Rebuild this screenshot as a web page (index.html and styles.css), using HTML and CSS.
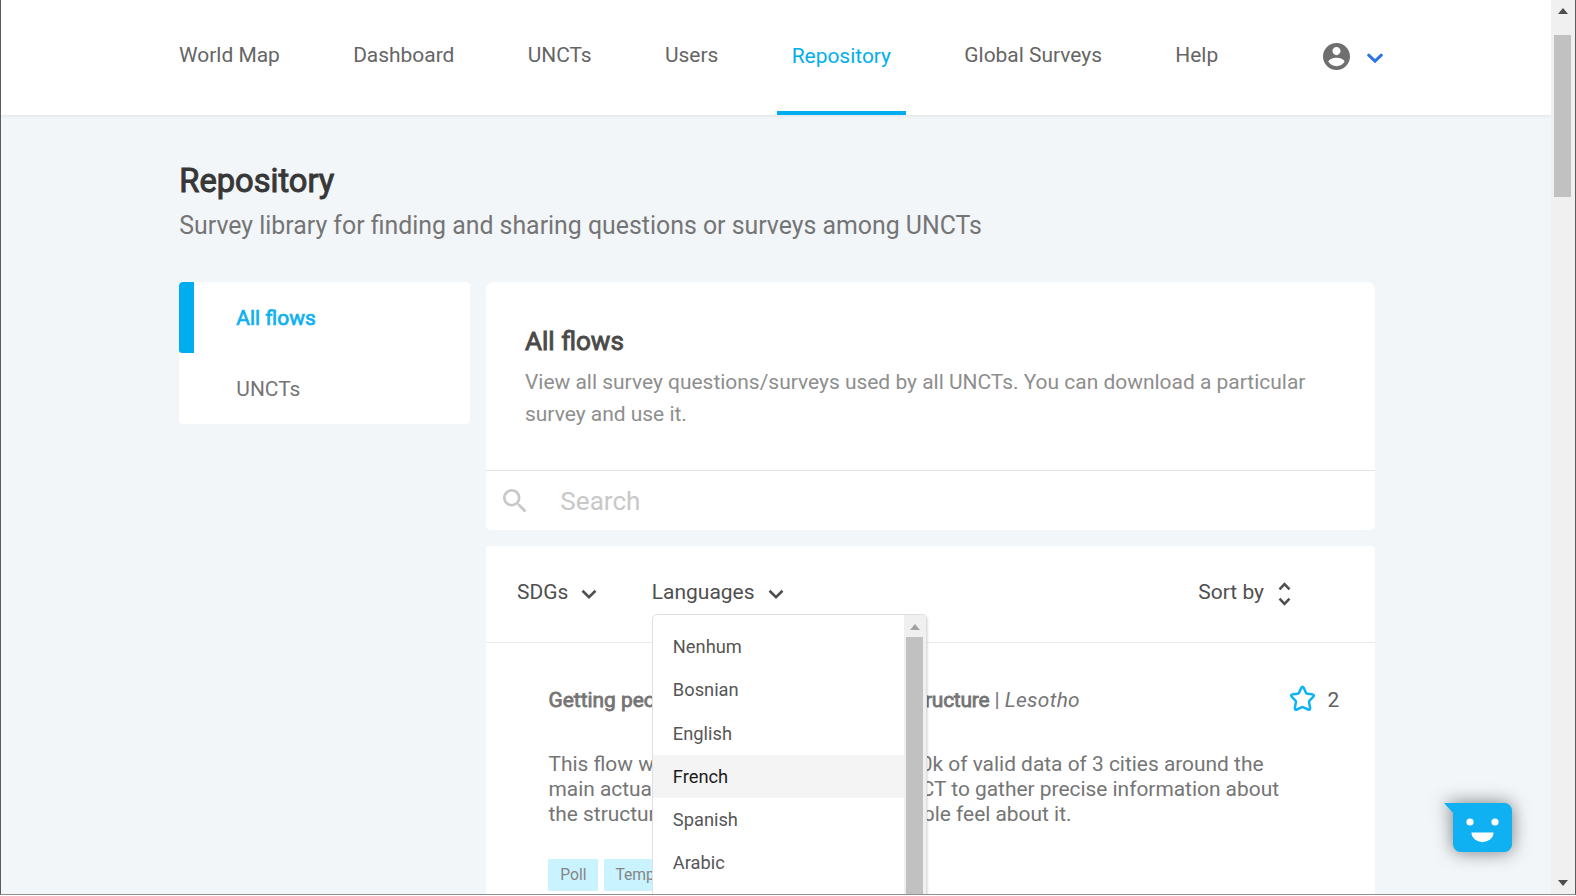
FILE: index.html
```html
<!DOCTYPE html>
<html lang="en">
<head>
<meta charset="utf-8">
<title>Repository</title>
<link rel="stylesheet" href="styles.css">
</head>
<body>
<div class="window">
  <div class="page">
    <header class="header">
      <nav class="nav">
        <a class="nav-item">World Map</a>
        <a class="nav-item">Dashboard</a>
        <a class="nav-item">UNCTs</a>
        <a class="nav-item">Users</a>
        <a class="nav-item nav-item-active">Repository</a>
        <a class="nav-item">Global Surveys</a>
        <a class="nav-item">Help</a>
      </nav>
      <div class="account">
        <svg class="account-icon" viewBox="2 2 20 20"><path d="M12 2C6.48 2 2 6.48 2 12s4.48 10 10 10 10-4.48 10-10S17.52 2 12 2zm0 3c1.66 0 3 1.34 3 3s-1.34 3-3 3-3-1.34-3-3 1.34-3 3-3zm0 14.2c-2.5 0-4.71-1.28-6-3.22.03-1.99 4-3.08 6-3.08 1.99 0 5.97 1.09 6 3.08-1.29 1.94-3.5 3.22-6 3.22z"/></svg>
        <svg class="account-chevron" viewBox="0 0 16 11"><path d="M1.7 2.2 8 8.2l6.3-6"/></svg>
      </div>
    </header>

    <main class="content">
      <h1 class="title">Repository</h1>
      <p class="subtitle">Survey library for finding and sharing questions or surveys among UNCTs</p>
      <div class="columns">
        <aside class="sidebar">
          <a class="side-item side-item-active">All flows</a>
          <a class="side-item">UNCTs</a>
        </aside>
        <div class="main">
          <section class="card intro">
            <div class="intro-text">
              <h2 class="heading">All flows</h2>
              <p class="description">View all survey questions/surveys used by all UNCTs. You can download a particular<br>survey and use it.</p>
            </div>
            <div class="search">
              <svg class="search-icon" viewBox="3 3 17.5 17.5"><path d="M15.5 14h-.79l-.28-.27C15.41 12.59 16 11.11 16 9.5 16 5.91 13.09 3 9.5 3S3 5.91 3 9.5 5.91 16 9.5 16c1.61 0 3.09-.59 4.23-1.57l.27.28v.79l5 4.99L20.49 19l-4.99-5zm-6 0C7.01 14 5 11.99 5 9.5S7.01 5 9.5 5 14 7.01 14 9.5 11.99 14 9.5 14z"/></svg>
              <span>Search</span>
            </div>
          </section>

          <section class="card flows">
            <div class="filters">
              <div class="filter">SDGs<svg class="chevron" viewBox="0 0 16 11"><path d="M1.5 1.8 8 8.2l6.5-6.4"/></svg></div>
              <div class="filter filter-languages">Languages<svg class="chevron" viewBox="0 0 16 11"><path d="M1.5 1.8 8 8.2l6.5-6.4"/></svg>
                <div class="menu">
                  <div class="menu-list">
                    <div class="menu-item">Nenhum</div>
                    <div class="menu-item">Bosnian</div>
                    <div class="menu-item">English</div>
                    <div class="menu-item menu-item-hover">French</div>
                    <div class="menu-item">Spanish</div>
                    <div class="menu-item">Arabic</div>
                  </div>
                  <div class="menu-scroll">
                    <svg class="menu-arrow" viewBox="0 0 10 6"><path d="M0 6 5 0l5 6z"/></svg>
                    <div class="menu-thumb"></div>
                  </div>
                </div>
              </div>
              <div class="sort">Sort by<svg class="sort-icon" viewBox="0 0 13 24"><path d="M1.5 7.3 6.5 2.2l5 5.1M1.5 16.7l5 5.1 5-5.1"/></svg></div>
            </div>
            <article class="flow">
              <div class="flow-head">
                <div class="flow-title"><b class="strong">Getting people</b><span><b class="strong strong-end">structure</b> | <i>Lesotho</i></span></div>
                <div class="stars"><svg class="star" viewBox="0 0 28 28"><path d="M12.700 3Q14 .6 15.300 3l2.300 5Q18 8.900 19 9l5.200.7q2.700.6.900 2.500l-3.800 3.900q-.7.700-.5 1.600l1.100 6q.2 2.700-2 1.700l-4.900-2.300q-1-.5-2 0l-4.900 2.300q-2.200 1-2-1.700l1.100-6q.2-.9-.5-1.600l-3.800-3.900Q1.100 10.300 3.800 9.700L9 9q1-.1 1.400-1z"/></svg>2</div>
              </div>
              <div class="line line-1"><span>This flow will</span><span>10k of valid data of 3 cities around the</span></div>
              <div class="line line-2"><span>main actual</span><span>UNCT to gather precise information about</span></div>
              <div class="line line-3"><span>the structure</span><span>people feel about it.</span></div>
              <div class="tags"><span class="tag">Poll</span><span class="tag">Template</span></div>
            </article>
          </section>
        </div>
      </div>
    </main>
  </div>
  <div class="scrollbar">
    <svg class="scroll-arrow" viewBox="0 0 10 6"><path d="M0 6 5 0l5 6z"/></svg>
    <div class="scroll-thumb"></div>
    <svg class="scroll-arrow scroll-arrow-down" viewBox="0 0 10 6"><path d="M0 0h10L5 6z"/></svg>
  </div>
  <svg class="chat" viewBox="0 0 69 50"><path class="chat-body" d="M0 0H60.5a7.5 7.5 0 0 1 7.5 7.5v34a7.5 7.5 0 0 1-7.5 7.5h-44A7.5 7.5 0 0 1 9 41.5V10z"/><circle cx="26" cy="19" r="3.6"/><circle cx="51" cy="19" r="3.6"/><path d="M27.5 29.5h22a11 9.7 0 0 1-22 0z"/></svg>
</div>
</body>
</html>
```
FILE: styles.css
```css
* { box-sizing: border-box; }
body { margin: 0; font-family: Roboto, sans-serif; background: #fff; }
h1, h2, p { margin: 0; }
svg { display: block; flex: none; }

.window {
  position: relative;
  display: flex;
  width: 1576px;
  height: 895px;
  overflow: hidden;
  border: solid #5c5c5c;
  border-width: 0 1px 1px 1px;
  border-bottom-color: #8f8f8f;
}
.page { flex: 1; min-width: 0; height: 894px; overflow: hidden; background: #f2f6f9; }

/* Header */
.header {
  position: relative;
  display: flex;
  height: 115px;
  padding-left: 163px;
  background: #fff;
  box-shadow: 0 1px 4px rgba(0, 0, 0, .08);
}
.nav { display: flex; gap: 43.3px; }
.nav-item {
  padding: 40px 15px 0;
  font-size: 20.95px;
  line-height: 30px;
  color: #656565;
  white-space: nowrap;
}
.nav-item-active { padding-top: 41px; color: #00aeef; border-bottom: 4px solid #00aeef; }
.account { display: flex; gap: 17px; padding: 43px 0 0 90px; }
.account-icon { width: 27px; height: 27px; fill: #6f6f6f; }
.account-chevron { width: 16px; height: 11px; margin-top: 10px; fill: none; stroke: #2f74e6; stroke-width: 3; stroke-linecap: round; }

/* Page heading */
.content { padding: 46px 0 0 178.3px; }
.title { font-size: 32.65px; font-weight: 400; line-height: 40px; color: #373737; -webkit-text-stroke: 1px #373737; }
.subtitle { margin-top: 7.7px; font-size: 24.86px; line-height: 34px; color: #757575; }
.columns { display: flex; align-items: flex-start; gap: 16px; margin-top: 39.8px; }

/* Sidebar */
.sidebar { width: 291px; background: #fff; border-radius: 4px; overflow: hidden; }
.side-item { display: block; height: 70.7px; padding-left: 57px; font-size: 20.97px; line-height: 73px; color: #757575; }
.side-item-active {
  padding-left: 42px;
  color: #0db0f0;
  border-left: 15px solid #00aeef;
  border-radius: 3px 0 0 3px;
  -webkit-text-stroke: .7px #0db0f0;
}

/* Intro card */
.main { width: 888.7px; }
.card { background: #fff; }
.intro { height: 247.7px; border-radius: 8px 8px 5px 5px; }
.intro-text { height: 188.2px; padding: 43px 38.7px 0; border-bottom: 1px solid #e2e2e2; }
.heading { font-size: 26.1px; font-weight: 400; line-height: 33px; color: #4a4a4a; -webkit-text-stroke: .9px #4a4a4a; }
.description { margin-top: 9px; font-size: 20.96px; line-height: 31.35px; color: #8e8e8e; white-space: nowrap; }
.search { display: flex; align-items: center; gap: 33.5px; height: 60px; padding-left: 17px; font-size: 26.1px; color: #c8c8c8; }
.search-icon { width: 23.5px; height: 23.5px; fill: #c8c8c8; }

/* Flow list */
.flows { height: 349px; margin-top: 16px; border-radius: 3px; }
.filters {
  display: flex;
  height: 97px;
  padding: 31px 84px 0 30.7px;
  font-size: 20.97px;
  line-height: 30px;
  color: #4f4f4f;
  border-bottom: 1.5px solid #e9e9e9;
}
.filter { display: flex; gap: 13px; }
.filter-languages { position: relative; margin-left: 54.5px; }
.chevron { width: 16px; height: 11px; margin-top: 12px; fill: none; stroke: #4f4f4f; stroke-width: 2.6; }
.sort { display: flex; gap: 14px; margin-left: auto; }
.sort-icon { width: 13px; height: 24px; margin-top: 5px; fill: none; stroke: #4f4f4f; stroke-width: 2.6; }

/* Languages dropdown */
.menu {
  position: absolute;
  z-index: 2;
  left: 0;
  top: 37px;
  display: flex;
  width: 275px;
  height: 340px;
  background: #fff;
  border: 1px solid #e0e0e0;
  border-radius: 5px;
  box-shadow: 1px 1px 2px rgba(0, 0, 0, .12);
  overflow: hidden;
}
.menu-list { flex: 1; padding-top: 10px; }
.menu-item { height: 43.2px; padding-left: 20px; font-size: 18.3px; line-height: 43.2px; color: #565656; }
.menu-item-hover { color: #1c1c1c; background: #f4f4f4; }
.menu-scroll { display: flex; flex-direction: column; align-items: center; width: 22px; padding-top: 9px; background: #f0f0f0; }
.menu-arrow { width: 10px; height: 6px; margin-bottom: 7px; fill: #a2a2a2; }
.menu-thumb { flex: 1; width: 17px; background: #c1c1c1; }

/* Flow entry */
.flow { padding: 41px 0 0 62.2px; font-size: 20.9px; color: #757575; }
.flow-head { display: flex; line-height: 30px; white-space: nowrap; }
.flow-title { display: flex; justify-content: space-between; width: 531.5px; padding-top: 1px; }
.strong { font-weight: 400; -webkit-text-stroke: .8px #757575; }
.strong-end { letter-spacing: -.2px; }
.flow-title i { letter-spacing: .3px; }
.stars { display: flex; gap: 11px; margin-left: 209.5px; padding-top: .6px; color: #5f5f5f; }
.star { width: 27px; height: 27px; fill: none; stroke: #0fb2f5; stroke-width: 2.6; stroke-linejoin: round; }
.line { display: flex; justify-content: space-between; height: 25px; line-height: 25px; white-space: nowrap; }
.line-1 { width: 715px; margin-top: 37px; }
.line-2 { width: 730.5px; }
.line-3 { width: 523px; }
.tags { display: flex; gap: 5.5px; margin-top: 32.2px; }
.tag { height: 31.5px; padding: 0 11.7px; font-size: 15.67px; line-height: 31.5px; color: #858585; background: #c9f3ff; }

/* Page scrollbar */
.scrollbar { display: flex; flex-direction: column; align-items: center; width: 24px; padding: 8px 1px 8px 0; background: #f0f0f0; }
.scroll-arrow { width: 10px; height: 6px; fill: #4f4f4f; }
.scroll-thumb { width: 17px; height: 162.5px; margin-top: 20.5px; background: #c1c1c1; }
.scroll-arrow-down { margin-top: auto; }

/* Chat launcher */
.chat { position: absolute; left: 1443px; top: 802.5px; width: 69px; height: 50px; fill: #fff; overflow: visible; filter: drop-shadow(0 0 9px rgba(0, 0, 0, .5)); }
.chat-body { fill: #10b1f2; }
```
